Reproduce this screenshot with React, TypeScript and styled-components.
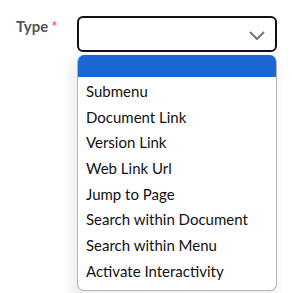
import React, { useState } from 'react'
import styled, { createGlobalStyle } from 'styled-components'

const options = [
  'Submenu',
  'Document Link',
  'Version Link',
  'Web Link Url',
  'Jump to Page',
  'Search within Document',
  'Search within Menu',
  'Activate Interactivity',
]

const App = () => {
  const [selected] = useState(-1)

  return <>
    <GlobalStyle />
    <FieldRow>
      <FieldLabel>
        Type<Required>*</Required>
      </FieldLabel>
      <SelectWrap>
        <SelectBox>
          <svg width="16" height="10" viewBox="0 0 16 10" fill="none">
            <path d="M1.5 1.5 L8 8 L14.5 1.5" stroke="#757575" strokeWidth="2" strokeLinecap="round" strokeLinejoin="round" />
          </svg>
        </SelectBox>
        <OptionList>
          <OptionItem $active={selected === -1} $blank>&nbsp;</OptionItem>
          {options.map((opt, i) => (
            <OptionItem key={opt} $active={selected === i}>{opt}</OptionItem>
          ))}
        </OptionList>
      </SelectWrap>
    </FieldRow>
  </>
}

export default App

const GlobalStyle = createGlobalStyle`
  html, body {
    margin: 0;
    padding: 0;
    background: #ffffff;
  }
  body {
    font-family: 'Lato', 'Liberation Sans', sans-serif;
    width: 292px;
    height: 293px;
    overflow: hidden;
  }
`

const FieldRow = styled.div`
  display: flex;
  flex-direction: row;
  padding: 16px 0 0 16px;
`

const FieldLabel = styled.label`
  width: 61px;
  padding-top: 0;

  font-family: 'Lato', sans-serif;
  font-weight: 700;
  font-size: 15px;
  line-height: 20px;
  color: #555555;
`

const Required = styled.span`
  margin-left: 3px;
  color: #e0474c;
  font-size: 15px;
  font-weight: 400;
`

const SelectWrap = styled.div`
  position: relative;
  width: 200px;
`

const SelectBox = styled.div`
  box-sizing: border-box;
  display: flex;
  align-items: center;
  justify-content: flex-end;
  height: 36px;
  padding: 4px 10px 0 0;

  background: #ffffff;
  border: 2px solid #111111;
  border-radius: 6px;
`

const OptionList = styled.ul`
  position: absolute;
  top: 39px;
  left: 0;
  box-sizing: border-box;
  width: 200px;
  margin: 0;
  padding: 0 0 5px 0;
  list-style: none;

  background: #ffffff;
  border: 1px solid #b5b5b5;
  border-top: none;
  border-radius: 7px;
  overflow: hidden;
  box-shadow: -4px 6px 8px 4px rgba(0, 0, 0, 0.06);
`

const OptionItem = styled.li<{ $active?: boolean; $blank?: boolean }>`
  padding: 0 8px;
  height: ${p => (p.$blank ? '22px' : '25.7px')};
  margin-bottom: ${p => (p.$blank ? '2px' : '0')};

  font-family: 'Lato', sans-serif;
  font-size: 15px;
  line-height: ${p => (p.$blank ? '22px' : '25.7px')};
  color: ${p => (p.$active ? '#ffffff' : '#111111')};
  white-space: nowrap;

  background: ${p => (p.$active ? '#1a67d3' : 'transparent')};
`
